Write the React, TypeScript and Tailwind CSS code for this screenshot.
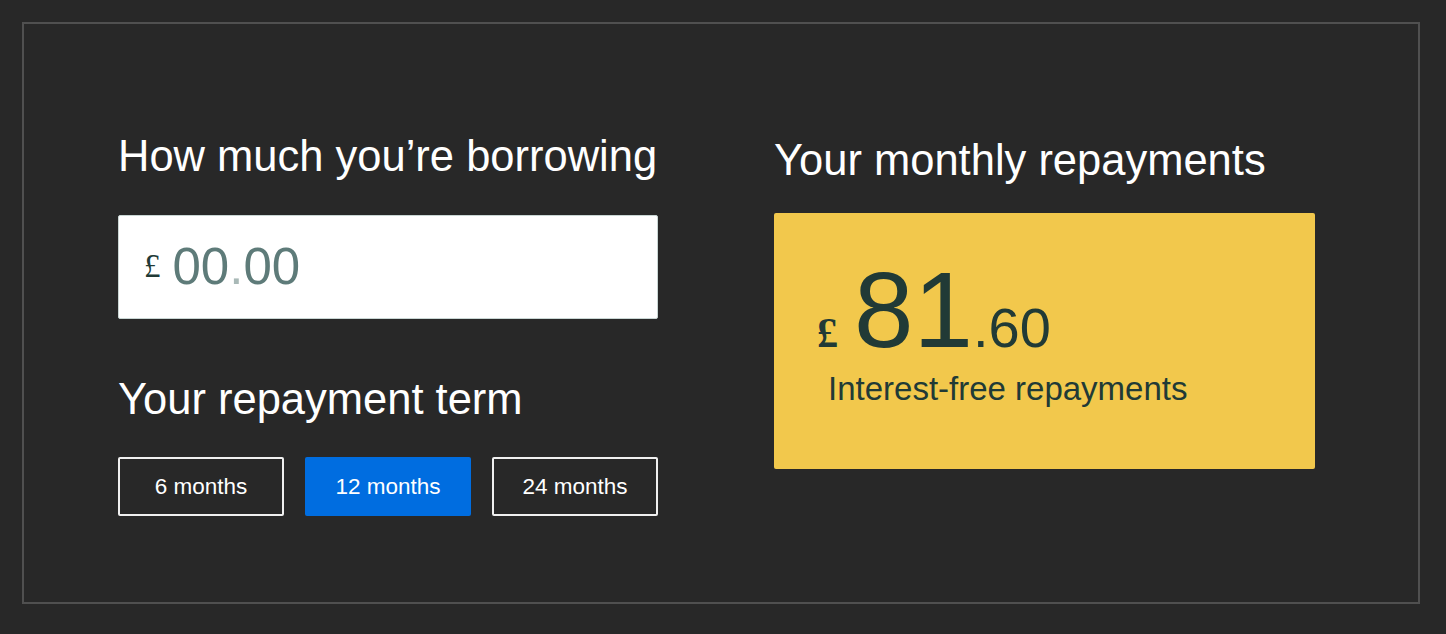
import { useState } from "react";

const terms = ["6 months", "12 months", "24 months"];

export default function App() {
  const [term, setTerm] = useState("12 months");

  return (
    <div className="min-h-[634px] w-full bg-[#282828] p-[22px] font-['Liberation_Sans',Arial,sans-serif]">
      <div className="flex h-[582px] w-[1398px] gap-[116px] border-2 border-[#505050] pl-[94px] pt-[108px]">
        {/* left: amount + term */}
        <div className="w-[540px]">
          <h2 className="text-[43.5px] leading-[48px] text-white">How much you’re borrowing</h2>
          <div className="mt-[35px] flex h-[104px] items-center rounded-[2px] border border-[#c9d6d4] bg-white pl-[25px]">
            <span className="font-['Liberation_Serif',serif] text-[33px] text-[#213a36]">£</span>
            <span className="ml-[12px] text-[51px] text-[#5e7b79]">
              00<span className="text-[#a9b9b7]">.</span>00
            </span>
          </div>
          <h2 className="mt-[56px] text-[43.5px] leading-[48px] text-white">Your repayment term</h2>
          <div className="mt-[34px] flex gap-[21px]">
            {terms.map((t) => (
              <button
                key={t}
                onClick={() => setTerm(t)}
                className={`h-[59px] w-[166px] rounded-[2px] text-[22.5px] text-white ${
                  term === t ? "bg-[#006de0]" : "border-2 border-[#f0f0f0]"
                }`}
              >
                {t}
              </button>
            ))}
          </div>
        </div>

        {/* right: result */}
        <div className="w-[541px] pt-[4px]">
          <h2 className="text-[43.5px] leading-[48px] text-white">Your monthly repayments</h2>
          <div className="mt-[29px] h-[256px] rounded-[2px] bg-[#f2c84c] pl-[43px] pt-[42px] text-[#213a36]">
            <div className="flex items-baseline">
              <span className="font-['Liberation_Serif',serif] text-[42px] font-bold">£</span>
              <span className="ml-[16px] text-[107px] leading-[110px]">81</span>
              <span className="text-[56px]">.60</span>
            </div>
            <div className="ml-[11px] mt-[-6px] text-[33px]">Interest-free repayments</div>
          </div>
        </div>
      </div>
    </div>
  );
}
